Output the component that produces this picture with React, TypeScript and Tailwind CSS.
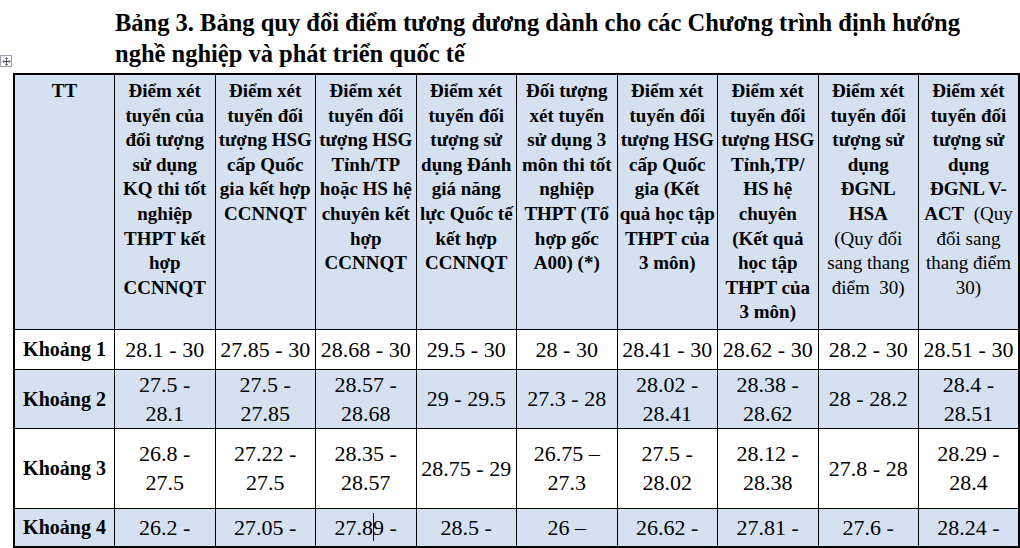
import { Fragment, ReactNode } from 'react'

const serif = { fontFamily: '"Liberation Serif", "Times New Roman", serif' }

// header lines, a line starting with "~" is set in regular weight
const headers: string[][] = [
  ['TT'],
  ['Điểm xét', 'tuyển của', 'đối tượng', 'sử dụng', 'KQ thi tốt', 'nghiệp', 'THPT kết', 'hợp', 'CCNNQT'],
  ['Điểm xét', 'tuyển đối', 'tượng HSG', 'cấp Quốc', 'gia kết hợp', 'CCNNQT'],
  ['Điểm xét', 'tuyển đối', 'tượng HSG', 'Tỉnh/TP', 'hoặc HS hệ', 'chuyên kết', 'hợp', 'CCNNQT'],
  ['Điểm xét', 'tuyển đối', 'tượng sử', 'dụng Đánh', 'giá năng', 'lực Quốc tế', 'kết hợp', 'CCNNQT'],
  ['Đối tượng', 'xét tuyển', 'sử dụng 3', 'môn thi tốt', 'nghiệp', 'THPT (Tổ', 'hợp gốc', 'A00) (*)'],
  ['Điểm xét', 'tuyển đối', 'tượng HSG', 'cấp Quốc', 'gia (Kết', 'quả học tập', 'THPT của', '3 môn)'],
  ['Điểm xét', 'tuyển đối', 'tượng HSG', 'Tỉnh,TP/', 'HS hệ', 'chuyên', '(Kết quả', 'học tập', 'THPT của', '3 môn)'],
  ['Điểm xét', 'tuyển đối', 'tượng sử', 'dụng', 'ĐGNL', 'HSA', '~(Quy đổi', '~sang thang', '~điểm\u00a0 30)'],
  ['Điểm xét', 'tuyển đối', 'tượng sử', 'dụng', 'ĐGNL V-', 'ACT|~\u00a0 (Quy', '~đổi sang', '~thang điểm', '~30)'],
]

type Row = { label: string; h: string; shaded: boolean; cells: string[][] }

const rows: Row[] = [
  {
    label: 'Khoảng 1',
    h: 'h-[40px]',
    shaded: false,
    cells: [['28.1 - 30'], ['27.85 - 30'], ['28.68 - 30'], ['29.5 - 30'], ['28 - 30'], ['28.41 - 30'], ['28.62 - 30'], ['28.2 - 30'], ['28.51 - 30']],
  },
  {
    label: 'Khoảng 2',
    h: 'h-[58px]',
    shaded: true,
    cells: [['27.5 -', '28.1'], ['27.5 -', '27.85'], ['28.57 -', '28.68'], ['29 - 29.5'], ['27.3 - 28'], ['28.02 -', '28.41'], ['28.38 -', '28.62'], ['28 - 28.2'], ['28.4 -', '28.51']],
  },
  {
    label: 'Khoảng 3',
    h: 'h-[80px]',
    shaded: false,
    cells: [['26.8 -', '27.5'], ['27.22 -', '27.5'], ['28.35 -', '28.57'], ['28.75 - 29'], ['26.75 –', '27.3'], ['27.5 -', '28.02'], ['28.12 -', '28.38'], ['27.8 - 28'], ['28.29 -', '28.4']],
  },
  {
    label: 'Khoảng 4',
    h: 'h-[39px]',
    shaded: true,
    cells: [['26.2 -'], ['27.05 -'], ['27.8|9 -'], ['28.5 -'], ['26 –'], ['26.62 -'], ['27.81 -'], ['27.6 -'], ['28.24 -']],
  },
]

const HeaderLine = ({ text }: { text: string }) => {
  const parts = text.split('|')
  return (
    <>
      {parts.map((p, i) =>
        p.startsWith('~') ? (
          <span key={i} className="font-normal">
            {p.slice(1)}
          </span>
        ) : (
          <span key={i}>{p}</span>
        )
      )}
    </>
  )
}

// "|" marks the text cursor sitting in the cell
const Value = ({ text }: { text: string }) => {
  if (!text.includes('|')) return <>{text}</>
  const [a, b] = text.split('|')
  return (
    <>
      {a}
      <span className="relative">
        <span className="absolute left-0 top-[-2px] h-[28px] w-px bg-black" />
        {b}
      </span>
    </>
  )
}

const MoveHandle = () => (
  <div className="absolute left-0 top-[55px] flex h-[12px] w-[12px] items-center justify-center border border-gray-400 bg-white">
    <svg viewBox="0 0 10 10" className="h-[9px] w-[9px]" fill="none" stroke="#333" strokeWidth="0.9">
      <path d="M5 0.8v8.4M1 5h8" />
      <path d="M3.6 2.2L5 0.8l1.4 1.4M3.6 7.8L5 9.2l1.4-1.4M2.4 3.6L1 5l1.4 1.4M7.6 3.6L9 5 7.6 6.4" />
    </svg>
  </div>
)

export default function App() {
  return (
    <div className="relative h-[548px] w-[1020px] overflow-hidden bg-white text-black" style={serif}>
      <MoveHandle />
      <h1 className="ml-[115px] pt-[7px] text-[24.5px] font-bold leading-[31px]">
        Bảng 3. Bảng quy đổi điểm tương đương dành cho các Chương trình định hướng
        <br />
        nghề nghiệp và phát triển quốc tế
      </h1>
      <table className="ml-[13px] mt-[4px] w-[1005px] table-fixed border-collapse border-2 border-black">
        <colgroup>
          {headers.map((_, i) => (
            <col key={i} className="w-[100.5px]" />
          ))}
        </colgroup>
        <thead>
          <tr>
            {headers.map((lines, i) => (
              <th
                key={i}
                className="h-[255px] border border-black bg-[#d5e1f1] px-0 pt-[4px] align-top text-[19px] font-bold leading-[24.6px] whitespace-nowrap"
              >
                {lines.map((l, j) => (
                  <Fragment key={j}>
                    {j > 0 && <br />}
                    <HeaderLine text={l} />
                  </Fragment>
                ))}
              </th>
            ))}
          </tr>
        </thead>
        <tbody>
          {rows.map((r) => (
            <tr key={r.label} className={r.shaded ? 'bg-[#d5e1f1]' : 'bg-white'}>
              <td className={`${r.h} border border-black p-0 text-center text-[20px] font-bold whitespace-nowrap`}>
                {r.label}
              </td>
              {r.cells.map((c, i) => (
                <td
                  key={i}
                  className="border border-black p-0 text-center align-middle text-[22px] leading-[29px] whitespace-nowrap"
                >
                  {c.map((l, j): ReactNode => (
                    <Fragment key={j}>
                      {j > 0 && <br />}
                      <Value text={l} />
                    </Fragment>
                  ))}
                </td>
              ))}
            </tr>
          ))}
        </tbody>
      </table>
    </div>
  )
}
